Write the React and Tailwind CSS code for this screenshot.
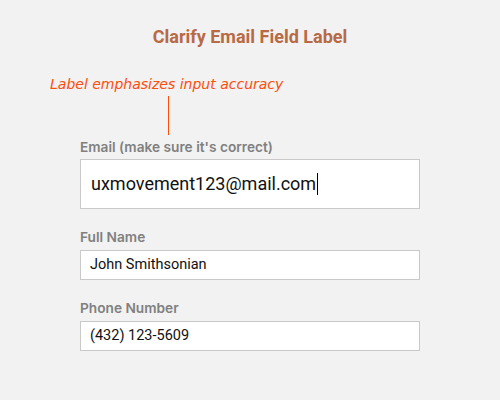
import React from 'react';

const fields = [
  { label: 'Full Name', value: 'John Smithsonian' },
  { label: 'Phone Number', value: '(432) 123-5609' },
];

export default function App() {
  return (
    <div className="w-[500px] h-[400px] bg-[#f2f2f2] font-['Roboto',sans-serif] overflow-hidden">
      {/* title */}
      <h1 className="pt-[26px] text-center text-[18px] font-bold leading-[22px] text-[#b86a45]">
        Clarify Email Field Label
      </h1>

      {/* annotation */}
      <p className="mt-[27px] pl-[50px] text-[14px] italic leading-[18px] text-[#ff4d0a] font-['DejaVu_Sans',sans-serif]">
        Label emphasizes input accuracy
      </p>
      <div className="ml-[168px] mt-[3px] h-[39px] w-px bg-[#ff4d0a]" />

      {/* form */}
      <div className="ml-[80px] w-[340px]">
        <label className="block mt-[4px] text-[13.7px] font-semibold leading-[16px] text-[#808080] font-['Inter',sans-serif]">
          Email (make sure it's correct)
        </label>
        <div className="mt-[4px] flex h-[50px] items-center border border-[#c9c9c9] bg-white pl-[10px]">
          <span className="text-[18px] leading-[22px] text-[#111]">uxmovement123@mail.com</span>
          <span className="ml-px h-[22px] w-px bg-black" />
        </div>

        {fields.map((f) => (
          <div key={f.label} className="mt-[20px]">
            <label className="block text-[13.7px] font-semibold leading-[16px] text-[#808080] font-['Inter',sans-serif]">{f.label}</label>
            <div className="mt-[5px] flex h-[30px] items-center border border-[#c9c9c9] bg-white pl-[9px]">
              <span className="text-[14.5px] text-[#111]">{f.value}</span>
            </div>
          </div>
        ))}
      </div>
    </div>
  );
}
